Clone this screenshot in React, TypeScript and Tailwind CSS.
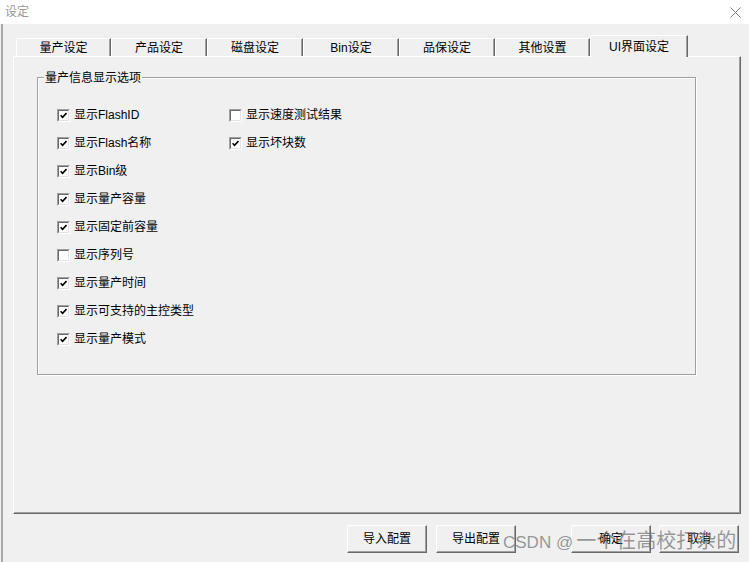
import React from 'react';

const Check = ({ checked }: { checked: boolean }) => (
  <div className="w-[13px] h-[13px] flex-none border border-t-[#a0a0a0] border-l-[#a0a0a0] border-b-white border-r-white">
    <div className="w-full h-full border border-t-[#696969] border-l-[#696969] border-b-[#e3e3e3] border-r-[#e3e3e3] bg-white flex items-center justify-center">
      {checked && (
        <svg width="7" height="7" viewBox="0 0 7 7">
          <path d="M0.6 3.2 L2.6 5.3 L6.5 1.1" stroke="#000" strokeWidth="1.6" fill="none" />
        </svg>
      )}
    </div>
  </div>
);

const Row = ({ label, checked }: { label: string; checked: boolean }) => (
  <div className="h-[28px] flex items-center gap-[4px]">
    <Check checked={checked} />
    <span className="text-[12px] leading-[16px] text-black whitespace-nowrap">{label}</span>
  </div>
);

const tabs = [
  { label: '量产设定', cls: 'w-[95px]' },
  { label: '产品设定', cls: 'w-[96px]' },
  { label: '磁盘设定', cls: 'w-[96px]' },
  { label: 'Bin设定', cls: 'w-[96px]' },
  { label: '品保设定', cls: 'w-[96px]' },
  { label: '其他设置', cls: 'w-[95px]' },
];

const leftItems: [string, boolean][] = [
  ['显示FlashID', true],
  ['显示Flash名称', true],
  ['显示Bin级', true],
  ['显示量产容量', true],
  ['显示固定前容量', true],
  ['显示序列号', false],
  ['显示量产时间', true],
  ['显示可支持的主控类型', true],
  ['显示量产模式', true],
];

const rightItems: [string, boolean][] = [
  ['显示速度测试结果', false],
  ['显示坏块数', true],
];

const Btn = ({ label, cls }: { label: string; cls: string }) => (
  <div
    className={
      'w-[80px] h-[28px] flex items-center justify-center text-[12px] leading-[16px] text-black bg-[#f0f0f0] border border-t-white border-l-white border-r-[#696969] border-b-[#696969] shadow-[inset_-1px_-1px_0_#a0a0a0] ' +
      cls
    }
  >
    {label}
  </div>
);

export default function App() {
  return (
    <div className="w-[749px] h-[562px] bg-[#f0f0f0] flex flex-col relative overflow-hidden font-['Liberation_Sans','Noto_Sans_CJK_SC',sans-serif]">
      {/* title bar */}
      <div className="h-[24px] flex-none bg-white flex items-center justify-between pl-[5px] pr-[8px]">
        <span className="text-[12px] leading-[16px] text-[#999999]">设定</span>
        <svg width="11" height="11" viewBox="0 0 11 11">
          <path d="M0.5 0.5 L10.5 10.5 M10.5 0.5 L0.5 10.5" stroke="#7a7a7a" strokeWidth="1" fill="none" />
        </svg>
      </div>

      {/* body */}
      <div className="flex-1 flex flex-col ml-px border-l-2 border-l-[#a9a9a9] pl-[10px] pr-[8px]">
        {/* tabs */}
        <div className="flex items-end h-[21px] mt-[11px] pl-[3px]">
          {tabs.map((t) => (
            <div
              key={t.label}
              className={
                'h-[18px] flex items-center justify-center text-[12px] leading-[16px] text-black border-t border-l border-r border-t-white border-l-white border-r-[#696969] shadow-[inset_-1px_0_0_#a0a0a0] rounded-tl-[2px] ' +
                t.cls
              }
            >
              {t.label}
            </div>
          ))}
          <div className="w-[98px] h-[22px] -mb-px relative z-10 bg-[#f0f0f0] flex items-center justify-center text-[12px] leading-[16px] text-black border-t border-l border-r border-t-white border-l-white border-r-[#696969] shadow-[inset_-1px_0_0_#a0a0a0] rounded-tl-[2px]">
            UI界面设定
          </div>
        </div>

        {/* panel */}
        <div className="h-[458px] flex-none border border-t-white border-l-white border-r-[#696969] border-b-[#696969] shadow-[inset_-1px_-1px_0_#a0a0a0]">
          <div className="ml-[23px] mt-[20px] w-[659px] h-[298px] relative border border-[#a0a0a0] shadow-[inset_1px_1px_0_#fff,1px_1px_0_#fff]">
            <span className="absolute left-[6px] -top-[8px] bg-[#f0f0f0] px-px text-[12px] leading-[16px] text-black whitespace-nowrap">
              量产信息显示选项
            </span>
            <div className="flex pt-[23px] pl-[19px]">
              <div className="w-[172px] flex flex-col">
                {leftItems.map(([l, c]) => (
                  <Row key={l} label={l} checked={c} />
                ))}
              </div>
              <div className="flex flex-col">
                {rightItems.map(([l, c]) => (
                  <Row key={l} label={l} checked={c} />
                ))}
              </div>
            </div>
          </div>
        </div>

        {/* buttons */}
        <div className="flex mt-[11px] pr-[2px]">
          <Btn label="导入配置" cls="ml-auto" />
          <Btn label="导出配置" cls="ml-[9px]" />
          <Btn label="确定" cls="ml-[55px]" />
          <Btn label="取消" cls="ml-[8px]" />
        </div>
      </div>

      {/* watermark */}
      <div className="absolute left-[503px] top-[528px] whitespace-nowrap text-[rgba(110,110,110,0.7)] flex items-baseline">
        <span className="font-['Liberation_Sans',sans-serif] text-[17px] leading-[24px]">CSDN @</span>
        <span className="font-['Noto_Sans_CJK_SC',sans-serif] text-[20px] leading-[24px] ml-[3px]">一个在高校打杂的</span>
      </div>
    </div>
  );
}
